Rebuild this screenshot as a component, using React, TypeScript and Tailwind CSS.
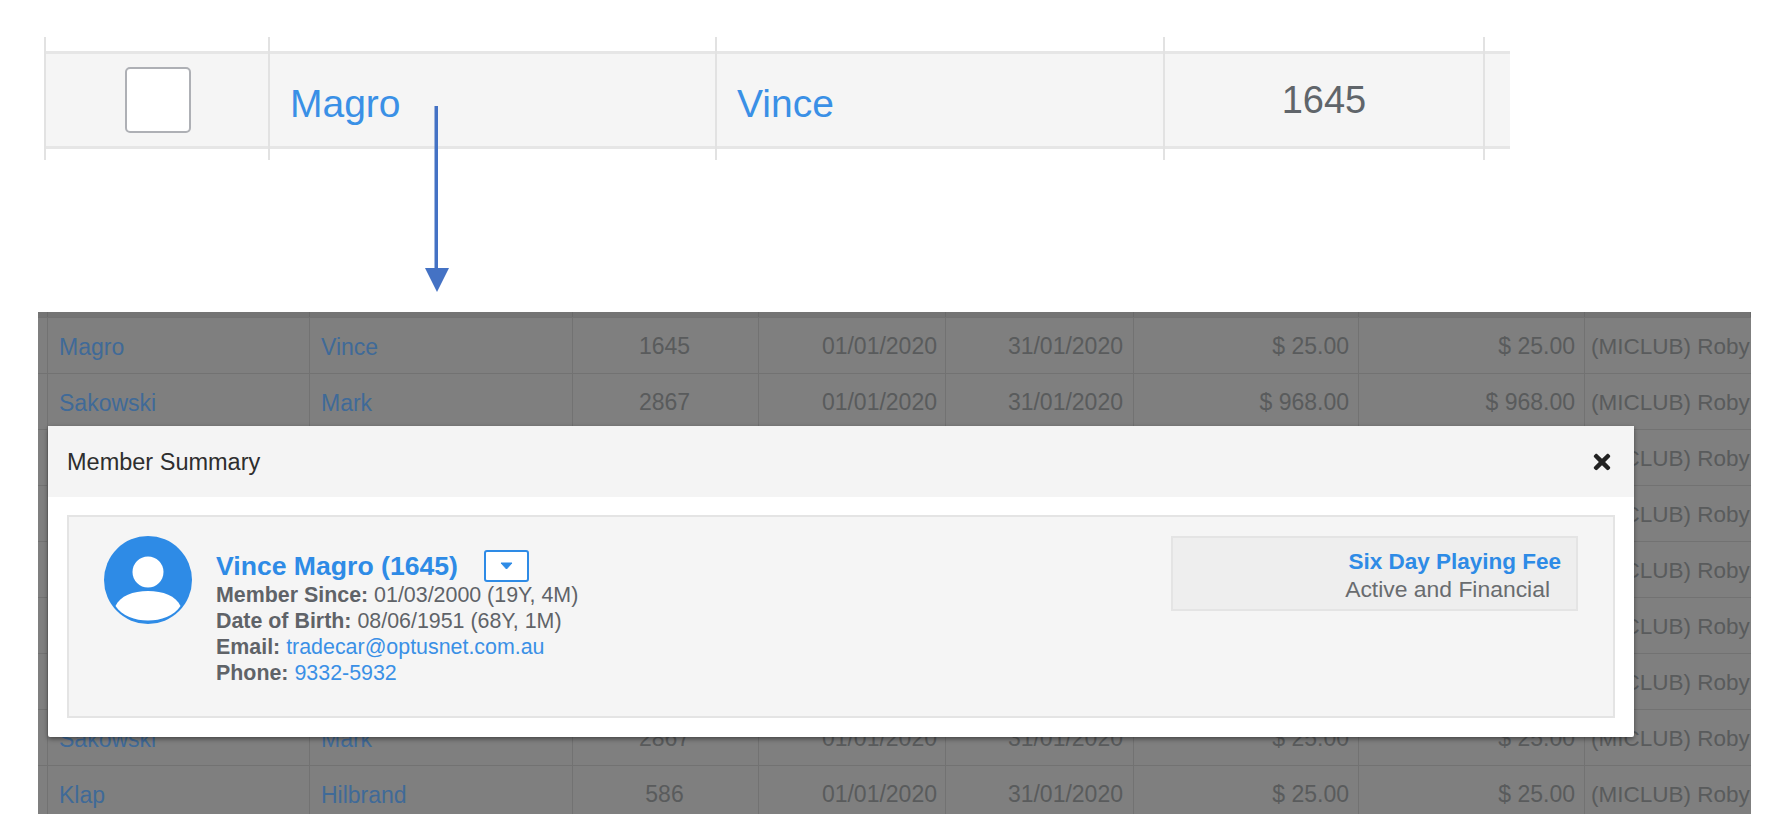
import { FaTimes } from "react-icons/fa";

const FONT = "font-['Liberation_Sans',Arial,sans-serif]";

type Row = {
  last?: string;
  first?: string;
  no?: string;
  start?: string;
  end?: string;
  fee?: string;
  paid?: string;
};

const rows: Row[] = [
  { last: "Magro", first: "Vince", no: "1645", start: "01/01/2020", end: "31/01/2020", fee: "$ 25.00", paid: "$ 25.00" },
  { last: "Sakowski", first: "Mark", no: "2867", start: "01/01/2020", end: "31/01/2020", fee: "$ 968.00", paid: "$ 968.00" },
  {},
  {},
  {},
  {},
  {},
  { last: "Sakowski", first: "Mark", no: "2867", start: "01/01/2020", end: "31/01/2020", fee: "$ 25.00", paid: "$ 25.00" },
  { last: "Klap", first: "Hilbrand", no: "586", start: "01/01/2020", end: "31/01/2020", fee: "$ 25.00", paid: "$ 25.00" },
];

const GRID = "grid grid-cols-[10px_262px_263px_186px_187px_188px_225px_226px_166px]";
const CELL = "border-r border-[#727272] flex items-center overflow-hidden whitespace-nowrap";

function StripColumn({ width, children }: { width: string; children?: React.ReactNode }) {
  return (
    <div className={`${width} h-[123px] border-l-2 border-[#e2e2e2] pt-[14px] pb-[11px]`}>
      <div className="flex h-full items-center border-y-[3px] border-[#e6e6e6] bg-[#f5f5f5]">{children}</div>
    </div>
  );
}

function TableRow({ row }: { row: Row }) {
  return (
    <div className={`${GRID} h-[56px] border-b border-[#727272] text-[23px] text-[#595b5c]`}>
      <div className={CELL} />
      <div className={`${CELL} pt-[4px] pl-[11px] text-[#3f6a98]`}>{row.last}</div>
      <div className={`${CELL} pt-[4px] pl-[11px] text-[#3f6a98]`}>{row.first}</div>
      <div className={`${CELL} justify-center pt-[2px] pr-[2px]`}>{row.no}</div>
      <div className={`${CELL} justify-end pt-[2px] pr-[8px]`}>{row.start}</div>
      <div className={`${CELL} justify-end pt-[2px] pr-[10px]`}>{row.end}</div>
      <div className={`${CELL} justify-end pt-[2px] pr-[9px]`}>{row.fee}</div>
      <div className={`${CELL} justify-end pt-[2px] pr-[9px]`}>{row.paid}</div>
      <div className="flex items-center pt-[2px] pl-[6px] text-[22.5px] whitespace-nowrap">(MICLUB) Roby</div>
    </div>
  );
}

function Avatar() {
  return (
    <svg width="88" height="88" viewBox="0 0 88 88" className="shrink-0">
      <circle cx="44" cy="44" r="44" fill="#2e8be6" />
      <circle cx="44" cy="36" r="15.5" fill="#fff" />
      <path d="M11.5 70 C16 60 29 55 44 55 C59 55 72 60 76.5 70 C70 80 57 84.5 44 84.5 C31 84.5 18 80 11.5 70 Z" fill="#fff" />
    </svg>
  );
}

function Modal() {
  return (
    <div className="absolute top-[114px] left-[10px] h-[311px] w-[1586px] rounded-[2px] bg-white shadow-[0_2px_5px_rgba(0,0,0,0.45)]">
      <div className="flex h-[71px] items-center justify-between bg-[#f4f4f4] pr-[20px] pl-[19px]">
        <span className="pt-[3px] text-[23.5px] text-[#2e2e2e]">Member Summary</span>
        <FaTimes size={24} className="text-[#222]" />
      </div>
      <div className="mx-[19px] mt-[18px] flex h-[203px] justify-between border-2 border-[#e4e4e4] bg-[#f5f5f5] pt-[19px] pr-[35px] pl-[35px]">
        <div className="flex">
          <Avatar />
          <div className="ml-[24px] pt-[14px] text-[21.4px] leading-[26px] text-[#5f6368]">
            <div className="flex h-[32px] items-center">
              <span className="text-[26.6px] font-bold text-[#2e8be6]">Vince Magro (1645)</span>
              <span className="ml-[26px] flex h-[32px] w-[45px] items-center justify-center rounded-[3px] border-2 border-[#2e8be6] bg-white">
                <svg width="13" height="8" viewBox="0 0 13 8">
                  <path d="M1 1 H12 L6.5 7 Z" fill="#2e8be6" stroke="#2e8be6" strokeLinejoin="round" />
                </svg>
              </span>
            </div>
            <div><b>Member Since:</b> 01/03/2000 (19Y, 4M)</div>
            <div><b>Date of Birth:</b> 08/06/1951 (68Y, 1M)</div>
            <div><b>Email:</b> <span className="text-[#3a90e6]">tradecar@optusnet.com.au</span></div>
            <div><b>Phone:</b> <span className="text-[#3a90e6]">9332-5932</span></div>
          </div>
        </div>
        <div className="flex h-[75px] w-[407px] flex-col items-end justify-center border-2 border-[#e4e4e4] bg-[#eeeeee] pt-[3px] pr-[15px]">
          <span className="text-[22.5px] leading-[27px] font-bold text-[#2e8be6]">Six Day Playing Fee</span>
          <span className="pr-[11px] text-[22.9px] leading-[28px] text-[#696c6f]">Active and Financial</span>
        </div>
      </div>
    </div>
  );
}

export default function App() {
  return (
    <div className={`${FONT} relative h-[832px] overflow-hidden bg-white pt-[37px]`}>
      <div className="ml-[44px] flex w-[1466px]">
        <StripColumn width="w-[224px]">
          <span className="ml-[79px] h-[66px] w-[66px] rounded-[5px] border-2 border-[#aeb0b5] bg-white" />
        </StripColumn>
        <StripColumn width="w-[447px]">
          <span className="pt-[8px] pl-[20px] text-[39px] text-[#3a90e6]">Magro</span>
        </StripColumn>
        <StripColumn width="w-[448px]">
          <span className="pt-[8px] pl-[20px] text-[39px] text-[#3a90e6]">Vince</span>
        </StripColumn>
        <StripColumn width="w-[320px]">
          <span className="w-full pt-[1px] text-center text-[38px] text-[#60656a]">1645</span>
        </StripColumn>
        <StripColumn width="w-[27px]" />
      </div>

      <svg width="26" height="186" viewBox="0 0 26 186" className="absolute top-[106px] left-[424px]">
        <rect x="10.5" y="0" width="3.5" height="164" fill="#4472c4" />
        <path d="M1 162 H25 L13 186 Z" fill="#4472c4" />
      </svg>

      <div className="relative mt-[152px] ml-[38px] h-[502px] w-[1713px] overflow-hidden bg-[#7f7f7f]">
        <div className={`${GRID} h-[6px] border-b border-[#727272] bg-[#747474]`}>
          {Array.from({ length: 9 }).map((_, i) => (
            <div key={i} className="border-r border-[#6a6a6a]" />
          ))}
        </div>
        {rows.map((row, i) => (
          <TableRow key={i} row={row} />
        ))}
        <Modal />
      </div>
    </div>
  );
}
